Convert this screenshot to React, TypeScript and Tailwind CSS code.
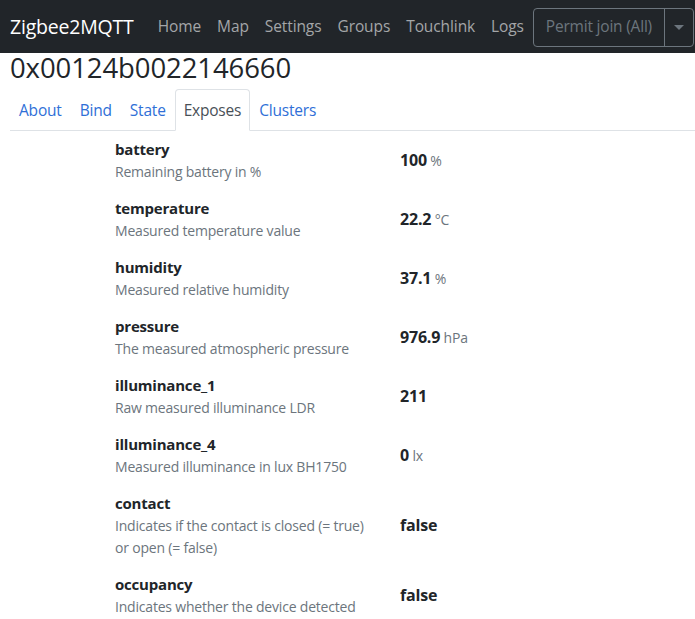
import React from "react";

const rows: { name: string; desc: string; value: string; unit?: string }[] = [
  { name: "battery", desc: "Remaining battery in %", value: "100", unit: "%" },
  { name: "temperature", desc: "Measured temperature value", value: "22.2", unit: "°C" },
  { name: "humidity", desc: "Measured relative humidity", value: "37.1", unit: "%" },
  { name: "pressure", desc: "The measured atmospheric pressure", value: "976.9", unit: "hPa" },
  { name: "illuminance_1", desc: "Raw measured illuminance LDR", value: "211" },
  { name: "illuminance_4", desc: "Measured illuminance in lux BH1750", value: "0", unit: "lx" },
  { name: "contact", desc: "Indicates if the contact is closed (= true) or open (= false)", value: "false" },
  { name: "occupancy", desc: "Indicates whether the device detected", value: "false" },
];

export default function App() {
  return (
    <div className="w-[695px] h-[619px] overflow-hidden bg-white text-[#212529]" style={{ fontFamily: '"Open Sans", "Noto Sans", sans-serif' }}>
      <nav className="h-[53px] bg-[#212529] flex items-center pl-[10px]">
        <span className="text-[19.5px] text-white mr-[16px] tracking-[-0.2px] whitespace-nowrap pt-[1px]">Zigbee2MQTT</span>
        <div className="flex items-center text-[15.5px] text-[#a4a6a8] tracking-[-0.1px] whitespace-nowrap pt-[1px]">
          {["Home", "Map", "Settings", "Groups", "Touchlink", "Logs"].map((l) => (
            <span key={l} className="px-[8px]">{l}</span>
          ))}
        </div>
        <div className="ml-auto shrink-0 mr-[1px] mt-[1px] h-[39px] flex border border-[#6c757d] rounded-[4px] text-[15.5px] text-[#6c757d] whitespace-nowrap">
          <span className="flex items-center px-[12px] tracking-[-0.2px]">Permit join (All)</span>
          <span className="flex items-center justify-center w-[29px] border-l border-[#6c757d]">
            <span className="w-0 h-0 border-l-[5px] border-r-[5px] border-t-[5px] border-l-transparent border-r-transparent border-t-[#6c757d]" />
          </span>
        </div>
      </nav>
      <div className="pl-[10px]">
        <h3 className="text-[27.5px] leading-[28px] pt-[1px] font-medium tracking-[-0.1px] m-0">0x00124b0022146660</h3>
        <div className="mt-[7px] flex border-b border-[#dee2e6] text-[15.5px] tracking-[-0.2px]">
          {["About", "Bind", "State", "Exposes", "Clusters"].map((t) =>
            t === "Exposes" ? (
              <span key={t} className="px-[8px] pt-[8px] pb-[6px] leading-[25px] mb-[-1px] border border-[#dee2e6] border-b-white rounded-t-[4px] bg-white text-[#495057]">{t}</span>
            ) : (
              <span key={t} className="px-[8px] pt-[8px] pb-[6px] leading-[25px] border border-transparent text-[#2f6fd7]">{t}</span>
            )
          )}
        </div>
      </div>
      <div className="pl-[115px] pt-[6px] flex flex-col">
        {rows.map((r) => (
          <div key={r.name} className="flex items-center pb-[13px]">
            <div className="w-[285px]">
              <div className="text-[15px] font-bold leading-[24px] tracking-[-0.2px]">{r.name}</div>
              <div className="max-w-[262px] text-[14px] leading-[22px] text-[#6c757d] tracking-[-0.2px]">{r.desc}</div>
            </div>
            <div className="text-[16px] tracking-[-0.2px]">
              <span className="font-bold">{r.value}</span>
              {r.unit && <span className="text-[14px] text-[#6c757d]"> {r.unit}</span>}
            </div>
          </div>
        ))}
      </div>
    </div>
  );
}
